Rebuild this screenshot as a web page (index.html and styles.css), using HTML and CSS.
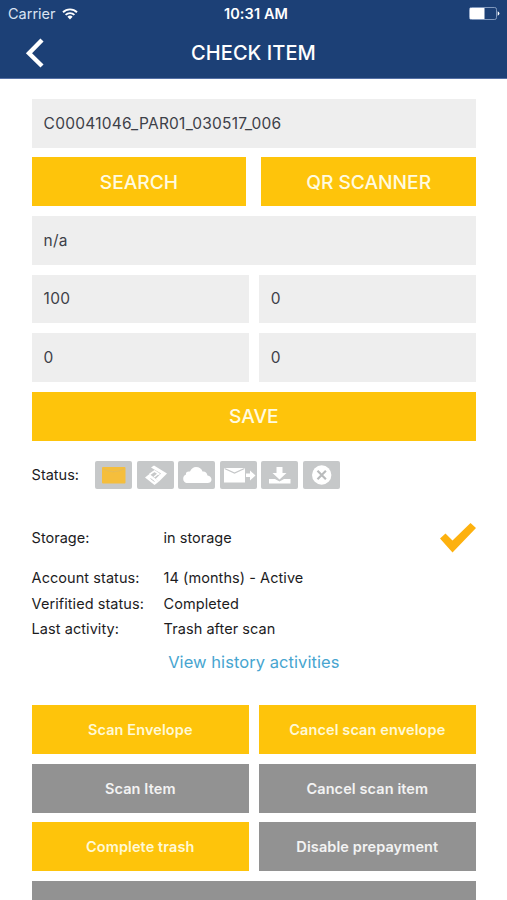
FILE: index.html
```html
<!DOCTYPE html>
<html lang="en">
<head>
<meta charset="utf-8">
<title>Check Item</title>
<link rel="stylesheet" href="styles.css">
</head>
<body>
<header class="header">
  <div class="statusbar">
    <div class="carrier"><span>Carrier</span>
      <svg width="16" height="12" viewBox="0 0 16 12" fill="none" stroke="#fff" stroke-width="1.9"><path d="M1 4.2a10 10 0 0 1 14 0M3.6 6.9a6.3 6.3 0 0 1 8.8 0"/><path d="M8 11.5 5.4 8.8a3.8 3.8 0 0 1 5.2 0z" fill="#fff" stroke="none"/></svg>
    </div>
    <div class="clock">10:31 AM</div>
    <svg class="battery" width="31" height="13" viewBox="0 0 31 13"><rect x=".5" y=".5" width="27" height="12" rx="1.8" fill="none" stroke="#8da4c6" stroke-width=".9"/><path d="M1.5 1H15.5V12H1.5Q.8 12 .8 11V2Q.8 1 1.5 1" fill="#fff"/><path d="M28.7 4.3q1.7.7 1.7 2.2t-1.7 2.2z" fill="#fff"/></svg>
  </div>
  <div class="navbar">
    <svg class="back" width="20" height="30" viewBox="0 0 20 30" fill="none" stroke="#fff" stroke-width="4.4"><path d="M17 2 4 15.200 17 28"/></svg>
    <h1 class="title">CHECK ITEM</h1>
  </div>
</header>
<main class="content">
  <section class="form">
    <div class="field wide code">C00041046_PAR01_030517_006</div>
    <div class="pair wide">
      <div class="button">SEARCH</div>
      <div class="button">QR SCANNER</div>
    </div>
    <div class="field wide">n/a</div>
    <div class="field">100</div>
    <div class="field">0</div>
    <div class="field">0</div>
    <div class="field">0</div>
    <div class="button wide">SAVE</div>
  </section>
  <section class="status">
    <span class="status-label">Status:</span>
    <div class="badges">
      <svg class="badge" viewBox="0 0 37 28"><rect x="7" y="6" width="23.500" height="16.500" rx="1" fill="#f5be3c"/><path d="M8 7.500Q18.500 14 29.500 7.500" fill="none" stroke="#e6bb55" stroke-width="1"/></svg>
      <svg class="badge" viewBox="0 0 37 28"><path d="M8 16.500 12.500 13 22 20.500 17.500 24z" fill="#fff"/><path d="M14 6.500 17 4.500 30 12.500 22 20.500 18.500 18 24 12.500z" fill="#fff"/><path d="m12.500 13.500 5-3.500 5 3.500M17 16l5-4" fill="none" stroke="#fff" stroke-width="1.600"/><path d="m13.500 17.500 4 3" stroke="#c6c8c9" stroke-width="1"/></svg>
      <svg class="badge" viewBox="0 0 37 28"><path d="M8.500 22A4.500 4.500 0 0 1 8 13.500Q7.500 10 12 10.500 14 6 18 6q5 0 6.500 4.500 4-.5 5 4 4 .8 4 4.500-.5 3-4 3z" fill="#fff"/></svg>
      <svg class="badge" viewBox="0 0 37 28"><path d="M4 7H25V21.500H4z" fill="#fff"/><path d="m4.500 7.500 10 4.500 10-4.500" fill="none" stroke="#c6c8c9" stroke-width="1.300"/><path d="M26 12.500h4V9.500l5.500 5-5.500 5V16h-4z" fill="#fff"/></svg>
      <svg class="badge" viewBox="0 0 37 28"><path d="M15.500 6h6v6h4L18.500 18.500 11.500 12h4zM8 18h6l4.500 2.500L23 18h6.500v4.500H8z" fill="#fff"/></svg>
      <svg class="badge" viewBox="0 0 37 28"><circle cx="18.700" cy="14" r="9.700" fill="#fff"/><path d="m14.500 9.800 8.400 8.400m0-8.400-8.400 8.400" stroke="#b9bbbc" stroke-width="2.200"/></svg>
    </div>
  </section>
  <section class="storage">
    <span class="label">Storage:</span>
    <span class="storage-value">in storage</span>
    <svg class="check" width="38" height="32" viewBox="0 0 38 32"><path d="m1 16.500 5.500-5 7 7L31.500 1 37 6 13.500 30.500z" fill="#fdb10e"/></svg>
  </section>
  <dl class="details">
    <dt>Account status:</dt><dd>14 (months) - Active</dd>
    <dt>Verifitied status:</dt><dd>Completed</dd>
    <dt>Last activity:</dt><dd>Trash after scan</dd>
  </dl>
  <a class="history">View history activities</a>
  <section class="actions">
    <div class="action">Scan Envelope</div>
    <div class="action">Cancel scan envelope</div>
    <div class="action muted">Scan Item</div>
    <div class="action muted">Cancel scan item</div>
    <div class="action">Complete trash</div>
    <div class="action muted">Disable prepayment</div>
    <div class="action muted wide"></div>
  </section>
</main>
</body>
</html>
```
FILE: styles.css
```css
* { box-sizing: border-box; }
html { height: 100%; overflow: hidden; }
body {
  margin: 0;
  height: 900px;
  overflow: hidden;
  background: #fff;
  color: #1c1c1e;
  font-family: Inter, "Liberation Sans", sans-serif;
}
svg { display: block; }
.header { height: 79px; background: #1c4076; border-bottom: 1px solid #5570a5; color: #fff; }
.statusbar {
  display: grid;
  grid-template-columns: 1fr auto 1fr;
  align-items: center;
  height: 27px;
  padding: 0 7px 0 8px;
}
.carrier { display: flex; align-items: center; gap: 6px; font-size: 14.5px; color: #d9e3f2; }
.clock { font-size: 14.5px; font-weight: 600; padding-left: 4px; letter-spacing: .1px; }
.battery { justify-self: end; }
.navbar { display: grid; grid-template-columns: 60px 1fr 60px; align-items: center; height: 51px; }
.back { margin-left: 25px; }
.title { margin: 0; font-size: 20px; font-weight: 500; text-align: center; letter-spacing: .06px; }
.content { display: flex; flex-direction: column; padding: 19.8px 31px 0 31.6px; }
.form, .actions { display: grid; grid-template-columns: 1fr 1fr; grid-auto-rows: 48.9px; gap: 9.7px; }
.wide { grid-column: 1 / -1; }
.pair { display: grid; grid-template-columns: 1fr 1fr; gap: 15px; }
.field { display: flex; align-items: center; padding-left: 12px; background: #eee; color: #3d4048; font-size: 15.5px; letter-spacing: .24px; }
.button {
  display: flex;
  align-items: center;
  justify-content: center;
  background: #fec40b;
  color: #fffbe0;
  font-size: 19.2px;
  font-weight: 500;
}
.status { display: flex; align-items: center; height: 28px; margin-top: 20.2px; font-size: 14.5px; }
.status-label { width: 63.4px; }
.badges { display: flex; gap: 4.6px; }
.badge { width: 37px; height: 28px; border-radius: 2px; background: #c6c8c9; }
.storage { display: flex; align-items: center; height: 40px; margin-top: 29px; font-size: 14.5px; }
.label { width: 132px; }
.check { margin-left: auto; margin-right: -1px; }
.details { display: grid; grid-template-columns: 132px 1fr; grid-auto-rows: 25.7px; align-items: center; margin: 7px 0 0; font-size: 14.5px; letter-spacing: .06px; }
.details dd { margin: 0; }
.history { align-self: center; height: 26px; line-height: 26px; margin-top: 7px; color: #47a5d0; font-size: 16.5px; letter-spacing: .06px; }
.actions { margin-top: 30.5px; }
.action {
  display: flex;
  align-items: center;
  justify-content: center;
  background: #fec40b;
  color: #fff9d6;
  font-size: 14.5px;
  font-weight: 600;
  letter-spacing: .1px;
}
.muted { background: #929292; color: #f3f3f3; }
```
